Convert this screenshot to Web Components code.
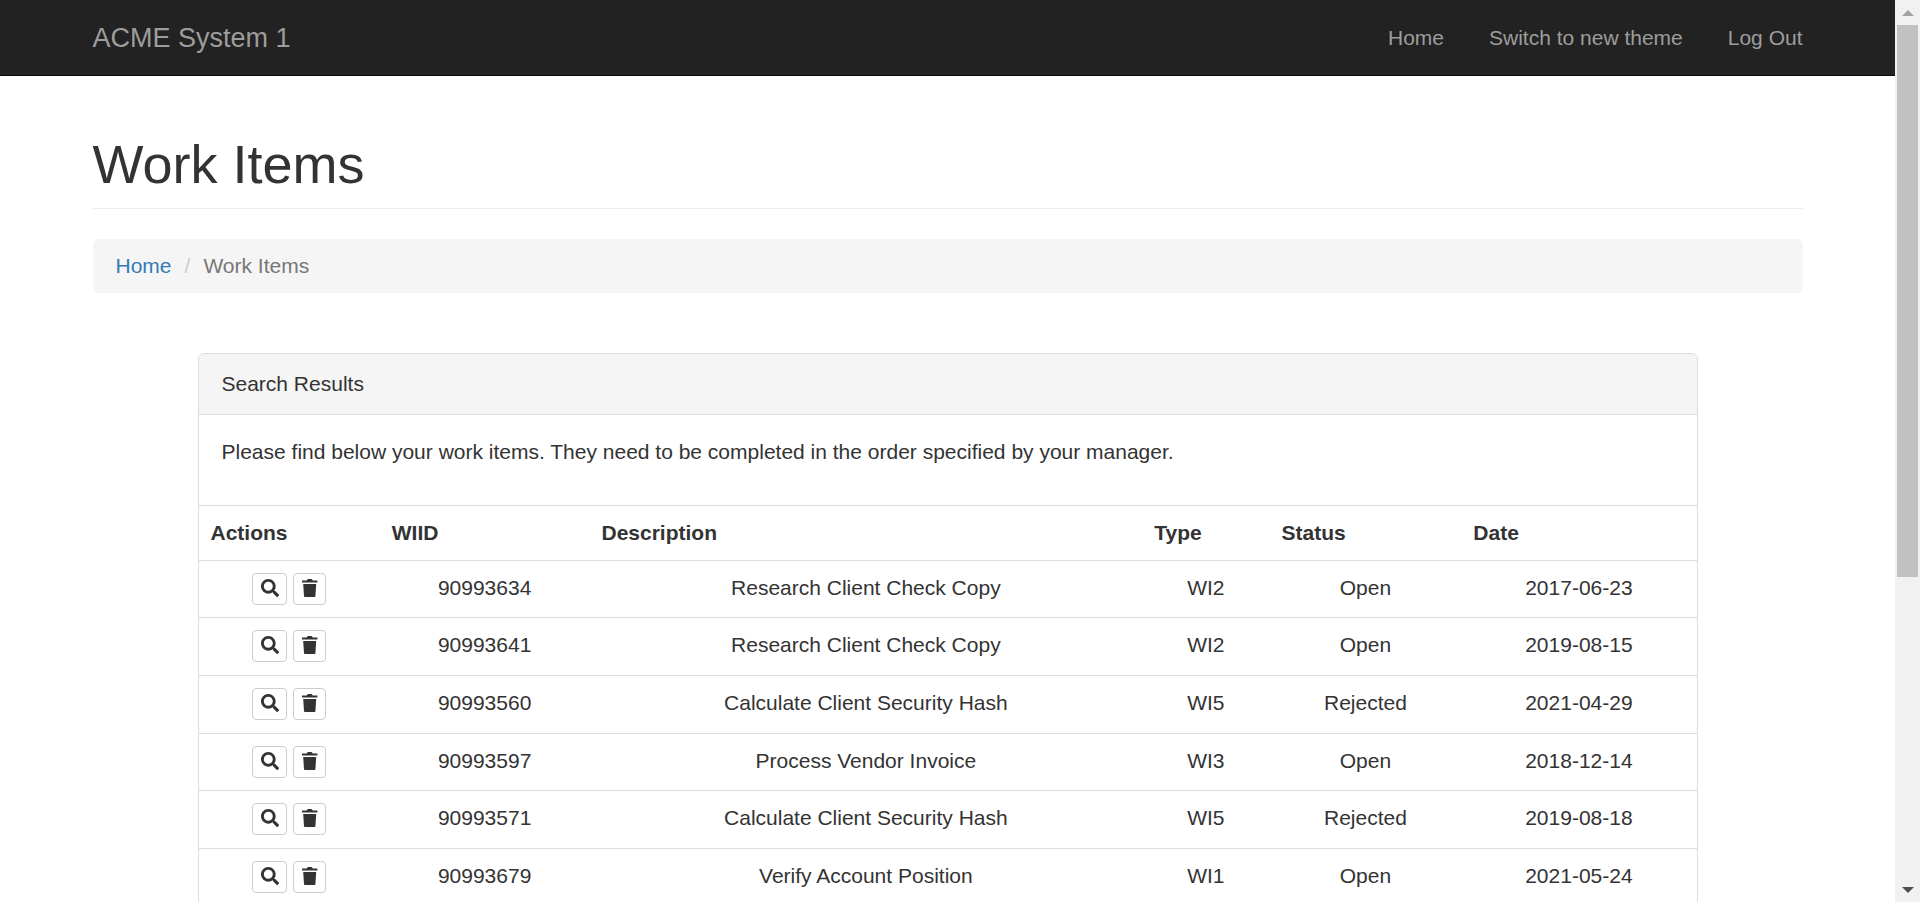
<!DOCTYPE html>
<html lang="en">
<head>
<meta charset="utf-8">
<meta name="viewport" content="width=device-width, initial-scale=1">
<title>ACME System 1 - Work Items</title>
<style>
  body {
    margin: 0;
    font: 21px/30px "Liberation Sans", Arial, Helvetica, sans-serif;
    color: #333;
    background: #fff;
  }
</style>
</head>
<body>
<app-shell>
  <nav-bar slot="header" brand="ACME System 1">
    <nav-link href="#home">Home</nav-link>
    <nav-link href="#theme">Switch to new theme</nav-link>
    <nav-link href="#logout">Log Out</nav-link>
  </nav-bar>
  <page-header>Work Items</page-header>
  <bread-crumb parent="Home" href="#home">Work Items</bread-crumb>
  <result-panel>
    <span slot="heading">Search Results</span>
    <span slot="intro">Please find below your work items. They need to be completed in the order specified by your manager.</span>
    <work-items></work-items>
  </result-panel>
</app-shell>

<script>
  const define = (name, html, setup) => {
    const template = document.createElement('template');
    template.innerHTML = html;
    customElements.define(name, class extends HTMLElement {
      constructor() {
        super();
        this.attachShadow({ mode: 'open' }).append(template.content.cloneNode(true));
      }
      connectedCallback() {
        if (setup) setup(this, this.shadowRoot);
      }
    });
  };

  define('app-shell', `
    <style>
      :host { display: grid; grid-template-columns: minmax(0, 1fr) auto; height: 100vh; }
      .page { overflow-y: auto; scrollbar-width: none; }
      main { max-width: 1710px; margin: 0 auto; padding-top: 58px; }
    </style>
    <div class="page">
      <slot name="header"></slot>
      <main><slot></slot></main>
    </div>
    <scroll-bar></scroll-bar>
  `);

  define('scroll-bar', `
    <style>
      :host { display: flex; flex-direction: column; width: 25px; background: #f1f1f1; }
      .arrow { display: flex; align-items: center; justify-content: center; height: 25px; }
      .track { display: grid; grid-template-rows: 552fr 300fr; flex: 1; padding: 0 2px; }
      .thumb { background: #c1c1c1; }
      svg { display: block; width: 12px; height: 6px; }
    </style>
    <div class="arrow"><svg viewBox="0 0 12 6" aria-hidden="true"><path d="M0 6 6 0l6 6z" fill="#a3a3a3"/></svg></div>
    <div class="track"><div class="thumb"></div></div>
    <div class="arrow"><svg viewBox="0 0 12 6" aria-hidden="true"><path d="M0 0h12L6 6z" fill="#505050"/></svg></div>
  `);

  define('nav-bar', `
    <style>
      :host { display: block; background: #222; border-bottom: 1px solid #080808; }
      nav { display: flex; align-items: center; justify-content: space-between; max-width: 1710px; height: 75px; margin: 0 auto; }
      .brand { font-size: 27px; color: #9d9d9d; text-decoration: none; }
      .links { display: flex; gap: 45px; }
    </style>
    <nav>
      <a class="brand" href="#"></a>
      <div class="links"><slot></slot></div>
    </nav>
  `, (el, root) => {
    root.querySelector('.brand').textContent = el.getAttribute('brand');
  });

  define('nav-link', `
    <style>
      :host { display: block; }
      a { color: #9d9d9d; text-decoration: none; }
      a:hover { color: #fff; }
    </style>
    <a><slot></slot></a>
  `, (el, root) => {
    root.querySelector('a').href = el.getAttribute('href');
  });

  define('page-header', `
    <style>
      :host { display: block; margin-bottom: 30px; padding-bottom: 14px; border-bottom: 1px solid #eee; }
      h1 { margin: 0; font-size: 54px; line-height: 60px; font-weight: 400; }
    </style>
    <h1><slot></slot></h1>
  `);

  define('bread-crumb', `
    <style>
      :host { display: block; margin-bottom: 60px; padding: 12px 23px; background: #f5f5f5; border-radius: 6px; }
      ol { display: flex; margin: 0; padding: 0; list-style: none; }
      a { color: #337ab7; text-decoration: none; }
      .sep { margin: 0 13px; color: #ccc; }
      .current { color: #777; }
    </style>
    <ol>
      <li><a></a></li>
      <li class="sep" aria-hidden="true">/</li>
      <li class="current" aria-current="page"><slot></slot></li>
    </ol>
  `, (el, root) => {
    const link = root.querySelector('a');
    link.textContent = el.getAttribute('parent');
    link.href = el.getAttribute('href');
  });

  define('result-panel', `
    <style>
      :host { display: block; max-width: 1498px; margin: 0 auto; border: 1px solid #ddd; border-radius: 6px; }
      header { padding: 15px 23px; background: #f5f5f5; border-bottom: 1px solid #ddd; border-radius: 5px 5px 0 0; }
      p { margin: 0; padding: 22px 23px 38px; }
    </style>
    <header><slot name="heading"></slot></header>
    <p><slot name="intro"></slot></p>
    <slot></slot>
  `);

  const ICONS = {
    search: ['0 0 512 512', 18, 'M505 442.7L405.3 343c-4.5-4.5-10.6-7-17-7H372c27.6-35.3 44-79.7 44-128C416 93.1 322.9 0 208 0S0 93.1 0 208s93.1 208 208 208c48.3 0 92.7-16.4 128-44v16.3c0 6.4 2.5 12.5 7 17l99.7 99.7c9.4 9.4 24.6 9.4 33.9 0l28.3-28.3c9.4-9.4 9.4-24.6.1-34zM208 336c-70.7 0-128-57.2-128-128 0-70.7 57.2-128 128-128 70.7 0 128 57.2 128 128 0 70.7-57.2 128-128 128z'],
    trash: ['0 0 16 18', 16, 'M0 1.6h4.6L5.3.4Q5.5 0 6 0h3.4q.5 0 .7.4l.7 1.2h4.6v2H0zM1.2 5h13l-.8 12.2q-.1.8-.9.8H2.9q-.8 0-.9-.8z']
  };

  define('icon-button', `
    <style>
      :host { display: block; }
      button { display: block; margin: 0; padding: 5px 7px 7px 8px; background: #fff; border: 1px solid #ccc; border-radius: 4px; color: #333; cursor: pointer; }
      svg { display: block; height: 18px; fill: currentColor; }
    </style>
    <button type="button"><svg aria-hidden="true"><path/></svg></button>
  `, (el, root) => {
    const [box, width, path] = ICONS[el.getAttribute('icon')];
    const svg = root.querySelector('svg');
    svg.setAttribute('viewBox', box);
    svg.setAttribute('width', width);
    root.querySelector('path').setAttribute('d', path);
    root.querySelector('button').setAttribute('aria-label', el.getAttribute('label'));
  });

  const ITEMS = [
    ['90993634', 'Research Client Check Copy', 'WI2', 'Open', '2017-06-23'],
    ['90993641', 'Research Client Check Copy', 'WI2', 'Open', '2019-08-15'],
    ['90993560', 'Calculate Client Security Hash', 'WI5', 'Rejected', '2021-04-29'],
    ['90993597', 'Process Vendor Invoice', 'WI3', 'Open', '2018-12-14'],
    ['90993571', 'Calculate Client Security Hash', 'WI5', 'Rejected', '2019-08-18'],
    ['90993679', 'Verify Account Position', 'WI1', 'Open', '2021-05-24']
  ];

  define('work-items', `
    <style>
      :host { display: block; }
      table { width: 100%; border-collapse: separate; border-spacing: 0; table-layout: fixed; }
      th, td { box-sizing: border-box; padding: 12px 12px 0; border-top: 1px solid #ddd; vertical-align: top; }
      th { height: 55px; text-align: left; font-weight: 700; }
      td { height: 58px; text-align: center; }
      tbody tr:nth-child(3n+1) td { height: 57px; }
      .actions { display: flex; justify-content: center; gap: 6px; }
    </style>
    <table>
      <colgroup>
        <col style="width:12.1%"><col style="width:14%"><col style="width:36.9%">
        <col style="width:8.5%"><col style="width:12.8%"><col style="width:15.7%">
      </colgroup>
      <thead>
        <tr><th>Actions</th><th>WIID</th><th>Description</th><th>Type</th><th>Status</th><th>Date</th></tr>
      </thead>
      <tbody></tbody>
    </table>
  `, (el, root) => {
    root.querySelector('tbody').innerHTML = ITEMS.map(item => `
      <tr>
        <td><div class="actions">
          <icon-button icon="search" label="View ${item[0]}"></icon-button>
          <icon-button icon="trash" label="Delete ${item[0]}"></icon-button>
        </div></td>
        ${item.map(value => `<td>${value}</td>`).join('')}
      </tr>`).join('');
  });
</script>
</body>
</html>
